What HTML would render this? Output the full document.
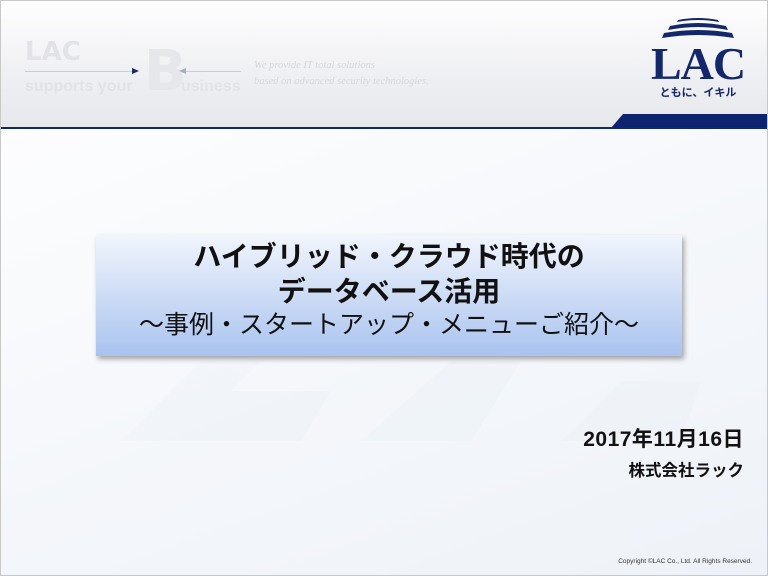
<!DOCTYPE html>
<html><head><meta charset="utf-8"><style>
*{margin:0;padding:0;box-sizing:border-box}
body{width:768px;height:576px;overflow:hidden;background:#fff;font-family:"Liberation Sans","Noto Sans CJK JP",sans-serif}
#s{position:absolute;left:0;top:0;width:768px;height:576px;border:1px solid #c8c8c8;background:linear-gradient(160deg,#ffffff 0%,#f6f8fb 50%,#eef2f8 100%);overflow:hidden}
#hd{position:absolute;left:0;top:0;width:768px;height:127px;background:linear-gradient(#ffffff 0%,#fbfbfc 12%,#eeeff2 60%,#e6e8ec 100%)}
#ln{position:absolute;left:0;top:126px;width:768px;height:2px;background:#0f2868}
#nb{position:absolute;left:610px;top:113px;width:160px;height:14px;background:#0c2470;clip-path:polygon(12px 0,100% 0,100% 100%,0 100%)}
.g{position:absolute;color:#e2e3e6;font-weight:bold}
#box{position:absolute;left:95px;top:234px;width:586px;height:121px;background:linear-gradient(#f1f5fc,#c6d7f4 60%,#a9c3ef);box-shadow:2px 3px 5px rgba(0,0,0,.35);text-align:center;color:#111}
.t{font-weight:bold;font-size:28px;line-height:35px;white-space:nowrap}
.t3{font-size:25px;line-height:32px;white-space:nowrap}
</style></head><body><div id="s">
<div id="hd"></div>
<div class="g" style="left:24px;top:36px;font-size:26px;font-family:'DejaVu Sans',sans-serif">LAC</div>
<div style="position:absolute;left:24px;top:70px;width:108px;height:1px;background:#c9ccd3"></div>
<div style="position:absolute;left:131px;top:67px;width:0;height:0;border-left:7px solid #1a2a6a;border-top:3px solid transparent;border-bottom:3px solid transparent"></div>
<div class="g" style="left:143px;top:38px;font-size:56px;font-family:'DejaVu Sans',sans-serif;color:#e6e7ea">B</div>
<div style="position:absolute;left:178px;top:67px;width:0;height:0;border-right:7px solid #aab0bb;border-top:3px solid transparent;border-bottom:3px solid transparent"></div>
<div style="position:absolute;left:185px;top:70px;width:55px;height:1px;background:#c9ccd3"></div>
<div class="g" style="left:24px;top:77px;font-size:16px">supports your</div>
<div class="g" style="left:180px;top:77px;font-size:16px">usiness</div>
<div style="position:absolute;left:253px;top:57px;font-size:10.5px;font-style:italic;font-family:'Liberation Serif',serif;color:#d5d7dc;line-height:16px">We provide IT total solutions<br>based on advanced security technologies.</div>
<svg style="position:absolute;left:650px;top:14px" width="95" height="84" viewBox="0 0 95 84">
<path d="M27 5 Q47 1 67 5 L68 7 Q47 3 26 7Z" fill="#15276b"/>
<path d="M19 11 Q47 5 75 11 L77 15 Q47 9 17 15Z" fill="#15276b"/>
<path d="M13 18 Q47 12 81 18 L83 23 Q47 17 11 23Z" fill="#15276b"/>
<text x="47" y="64" text-anchor="middle" font-family="Liberation Serif,serif" font-weight="bold" font-size="46" fill="#15276b" letter-spacing="-1">LAC</text>
<text x="47" y="81" text-anchor="middle" font-family="Noto Sans CJK JP,sans-serif" font-weight="bold" font-size="11" fill="#15276b">ともに、イキル</text>
</svg>
<div id="nb"></div><div id="ln"></div>
<svg style="position:absolute;left:0;top:300px" width="768" height="150"><path d="M120 140 L200 60 L260 60 L230 90 L330 90 L300 140Z M360 140 L450 60 L520 60 L470 140Z M560 140 L620 80 L700 80 L680 140Z" fill="#e9eef6" opacity=".3"/></svg>
<div id="box">
<div class="t" style="padding-top:4px">ハイブリッド・クラウド時代の</div>
<div class="t">データベース活用</div>
<div class="t3">～事例・スタートアップ・メニューご紹介～</div>
</div>
<div style="position:absolute;right:23px;top:422px;font-size:21px;font-weight:bold;color:#111;letter-spacing:0.5px">2017年11月16日</div>
<div style="position:absolute;right:23px;top:456px;font-size:16.5px;font-weight:bold;color:#111">株式会社ラック</div>
<div style="position:absolute;right:15px;top:557px;font-size:6.5px;color:#333">Copyright ©LAC Co., Ltd. All Rights Reserved.</div>
</div></body></html>
